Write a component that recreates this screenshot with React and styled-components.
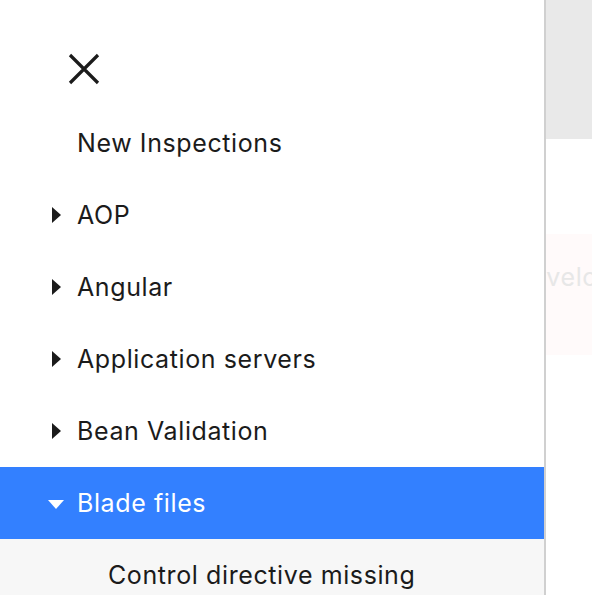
import React from 'react'
import styled, { createGlobalStyle } from 'styled-components'

const GlobalStyle = createGlobalStyle`
  html, body {
    margin: 0;
    padding: 0;
    background: #fff;
    font-family: Inter, "Noto Sans", sans-serif;
  }
  * { box-sizing: border-box; }
`

const Page = styled.div`
  position: relative;
  width: 100vw;
  height: 100vh;
  overflow: hidden;
`

const TopBar = styled.div`
  height: 139px;
  background: #e9e9e9;
`

const Banner = styled.div`
  margin-top: 95px;
  height: 121px;
  background: #fffafa;
  padding: 28px 0 0 513px;
  font-size: 25px;
  letter-spacing: 0.6px;
  color: #e7e7e7;
  white-space: nowrap;
  overflow: hidden;
`

// drawer lies over the page content
const Drawer = styled.nav`
  position: absolute;
  top: 0;
  left: 0;
  bottom: 0;
  width: 546px;
  background: #fff;
  border-right: 2px solid #d0d0d0;
  display: flex;
  flex-direction: column;
  overflow: hidden;
`

const DrawerHead = styled.div`
  height: 107px;
  flex-shrink: 0;
  padding: 53px 0 0 68px;
`

const CloseBtn = styled.button`
  width: 32px;
  height: 32px;
  padding: 0;
  border: 0;
  background: none;
  display: flex;
  align-items: center;
  justify-content: center;
  cursor: pointer;
`

const Row = styled.div`
  height: 72px;
  flex-shrink: 0;
  display: flex;
  align-items: center;
  padding-left: ${p => (p.child ? 108 : 48)}px;
  background: ${p => (p.active ? '#3380ff' : p.child ? '#f7f7f7' : '#fff')};
  color: ${p => (p.active ? '#fff' : '#1b1b1b')};
  font-size: 25px;
  letter-spacing: 0.6px;
`

const ArrowSlot = styled.span`
  width: 29px;
  display: flex;
  align-items: center;
  flex-shrink: 0;
`

const Arrow = styled.span`
  width: 0;
  height: 0;
  ${p =>
    p.open
      ? `
    border-left: 8px solid transparent;
    border-right: 8px solid transparent;
    border-top: 9px solid currentColor;
    margin-top: 2px;
  `
      : `
    margin-left: 4px;
    border-top: 8px solid transparent;
    border-bottom: 8px solid transparent;
    border-left: 9px solid currentColor;
  `}
`

const items = [
  { label: 'New Inspections', leaf: true },
  { label: 'AOP' },
  { label: 'Angular' },
  { label: 'Application servers' },
  { label: 'Bean Validation' },
  { label: 'Blade files', open: true, active: true },
]

export default function App() {
  return (
    <Page>
      <GlobalStyle />
      <TopBar />
      <Banner>Developer tools</Banner>
      <Drawer>
        <DrawerHead>
          <CloseBtn aria-label="Close">
            <svg width="32" height="32" viewBox="0 0 32 32">
              <path d="M2 2 L30 30 M30 2 L2 30" stroke="#1b1b1b" strokeWidth="3.2" />
            </svg>
          </CloseBtn>
        </DrawerHead>
        {items.map(it => (
          <Row key={it.label} active={it.active}>
            <ArrowSlot>{!it.leaf && <Arrow open={it.open} />}</ArrowSlot>
            {it.label}
          </Row>
        ))}
        <Row child>Control directive missing</Row>
      </Drawer>
    </Page>
  )
}
